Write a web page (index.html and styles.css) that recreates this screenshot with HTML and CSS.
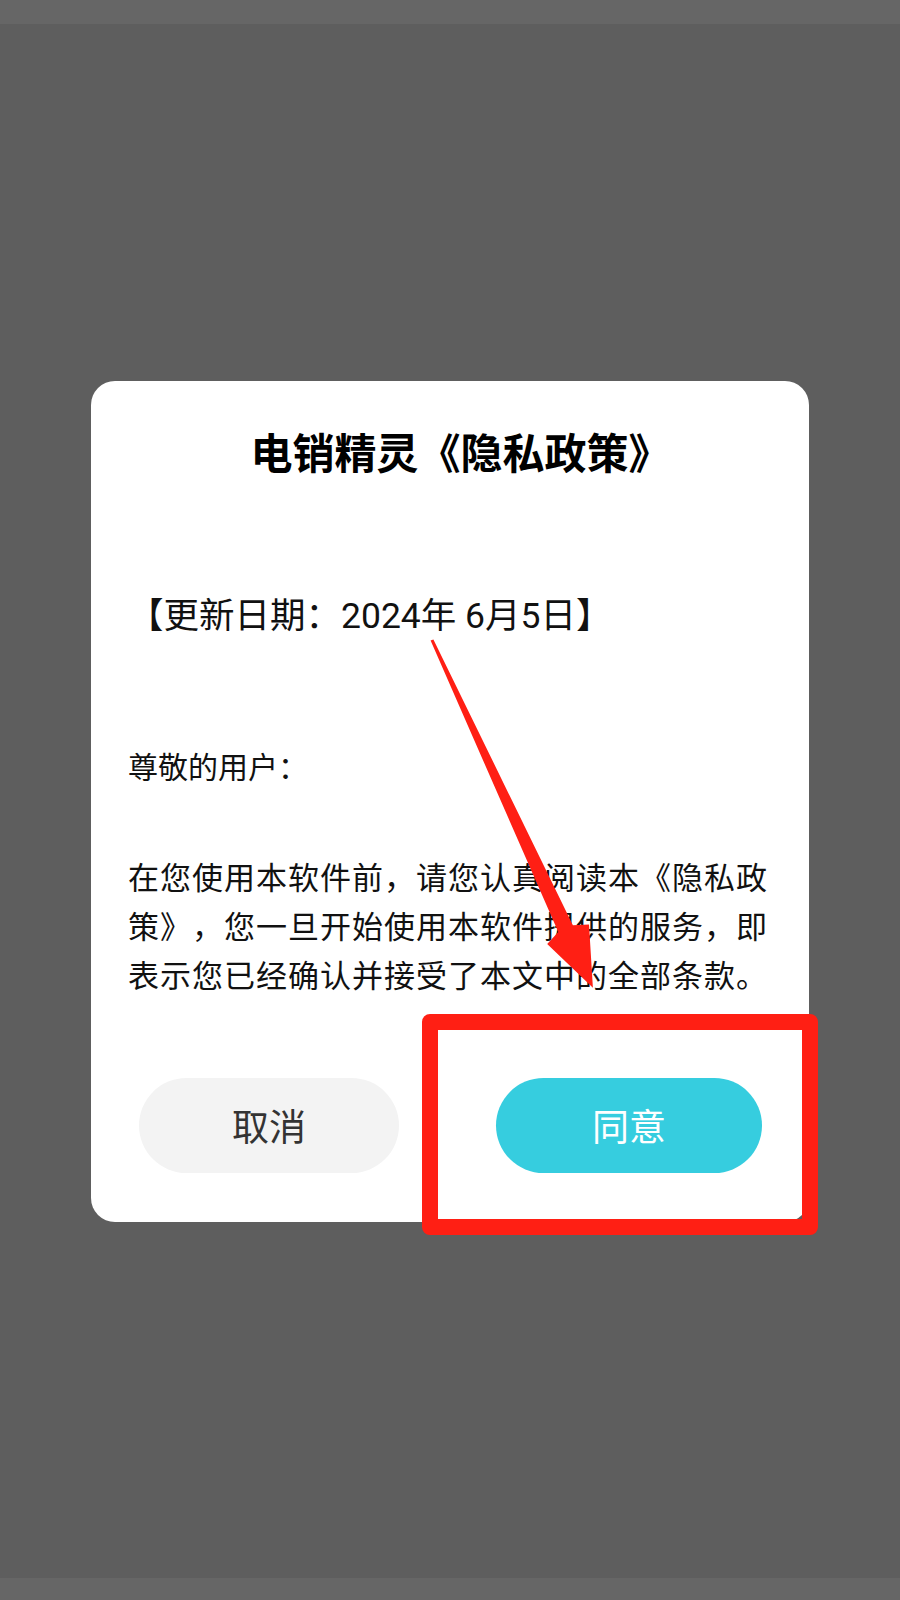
FILE: index.html
```html
<!DOCTYPE html>
<html lang="zh-CN">
<head>
  <meta charset="utf-8">
  <title>隐私政策</title>
  <link rel="stylesheet" href="styles.css">
</head>
<body>
  <div class="screen">
    <div class="status-bar"></div>
    <div class="scrim">
      <div class="dialog">
        <h1 class="dialog-title">电销精灵《隐私政策》</h1>
        <p class="update-date">【更新日期：2024年 6月5日】</p>
        <p class="greeting">尊敬的用户：</p>
        <p class="intro">在您使用本软件前，请您认真阅读本《隐私政策》，您一旦开始使用本软件提供的服务，即表示您已经确认并接受了本文中的全部条款。</p>
        <div class="dialog-actions">
          <button class="btn btn-cancel">取消</button>
          <button class="btn btn-agree">同意</button>
        </div>
      </div>
    </div>
    <div class="nav-bar"></div>

    <!-- red markup drawn over the screenshot -->
    <svg class="annotation" width="900" height="1600" viewBox="0 0 900 1600">
      <polygon points="430.6,640.6 433.4,639.4 572.9,925.3 589,924.5 592.9,987.8 547.2,943.9 558.3,932.1" fill="#ff1f14"/>
      <rect x="430" y="1022" width="380" height="205" fill="none" stroke="#ff1f14" stroke-width="16" stroke-linejoin="round"/>
    </svg>
  </div>
</body>
</html>
```

FILE: styles.css
```css
*{
  margin: 0;
  padding: 0;
  box-sizing: border-box;
}
body{
  font-family: Roboto, "Noto Sans CJK SC", sans-serif;
  background: #5e5e5e;
}
.screen{
  position: relative;
  width: 900px;
  height: 1600px;
  display: flex;
  flex-direction: column;
}
.status-bar{
  height: 24px;
  background: #666666;
}
.nav-bar{
  height: 22px;
  background: #666666;
}
.scrim{
  flex: 1;
  background: #5e5e5e;
  display: flex;
  justify-content: center;
  align-items: center;
}
.dialog{
  width: 718px;
  height: 841px;
  background: #ffffff;
  border-radius: 24px;
  display: flex;
  flex-direction: column;
  padding: 46px 36px 49px 37px;
  color: #111111;
  text-spacing-trim: space-all;
}
.dialog-title{
  padding-left: 20px;
  font-size: 42px;
  line-height: 56px;
  font-weight: 700;
  text-align: center;
  color: #000000;
}
.update-date{
  margin-top: 108px;
  font-size: 35.5px;
  line-height: 50px;
}
.greeting{
  margin-top: 104px;
  font-size: 30px;
  line-height: 46px;
}
.intro{
  margin-top: 63px;
  font-size: 31px;
  line-height: 49px;
  letter-spacing: 1px;
}
.dialog-actions{
  margin-top: auto;
  display: flex;
  gap: 97px;
  padding: 0 11px;
}
.btn{
  height: 95px;
  border: none;
  border-radius: 48px;
  font-family: Roboto, "Noto Sans CJK SC", sans-serif;
  font-size: 37px;
}
.btn-cancel{
  flex: 0 0 260px;
  background: #f3f3f3;
  color: #333333;
}
.btn-agree{
  flex: 1;
  background: #36cddf;
  color: #ffffff;
}
.annotation{
  position: absolute;
  top: 0;
  left: 0;
  pointer-events: none;
}
```
